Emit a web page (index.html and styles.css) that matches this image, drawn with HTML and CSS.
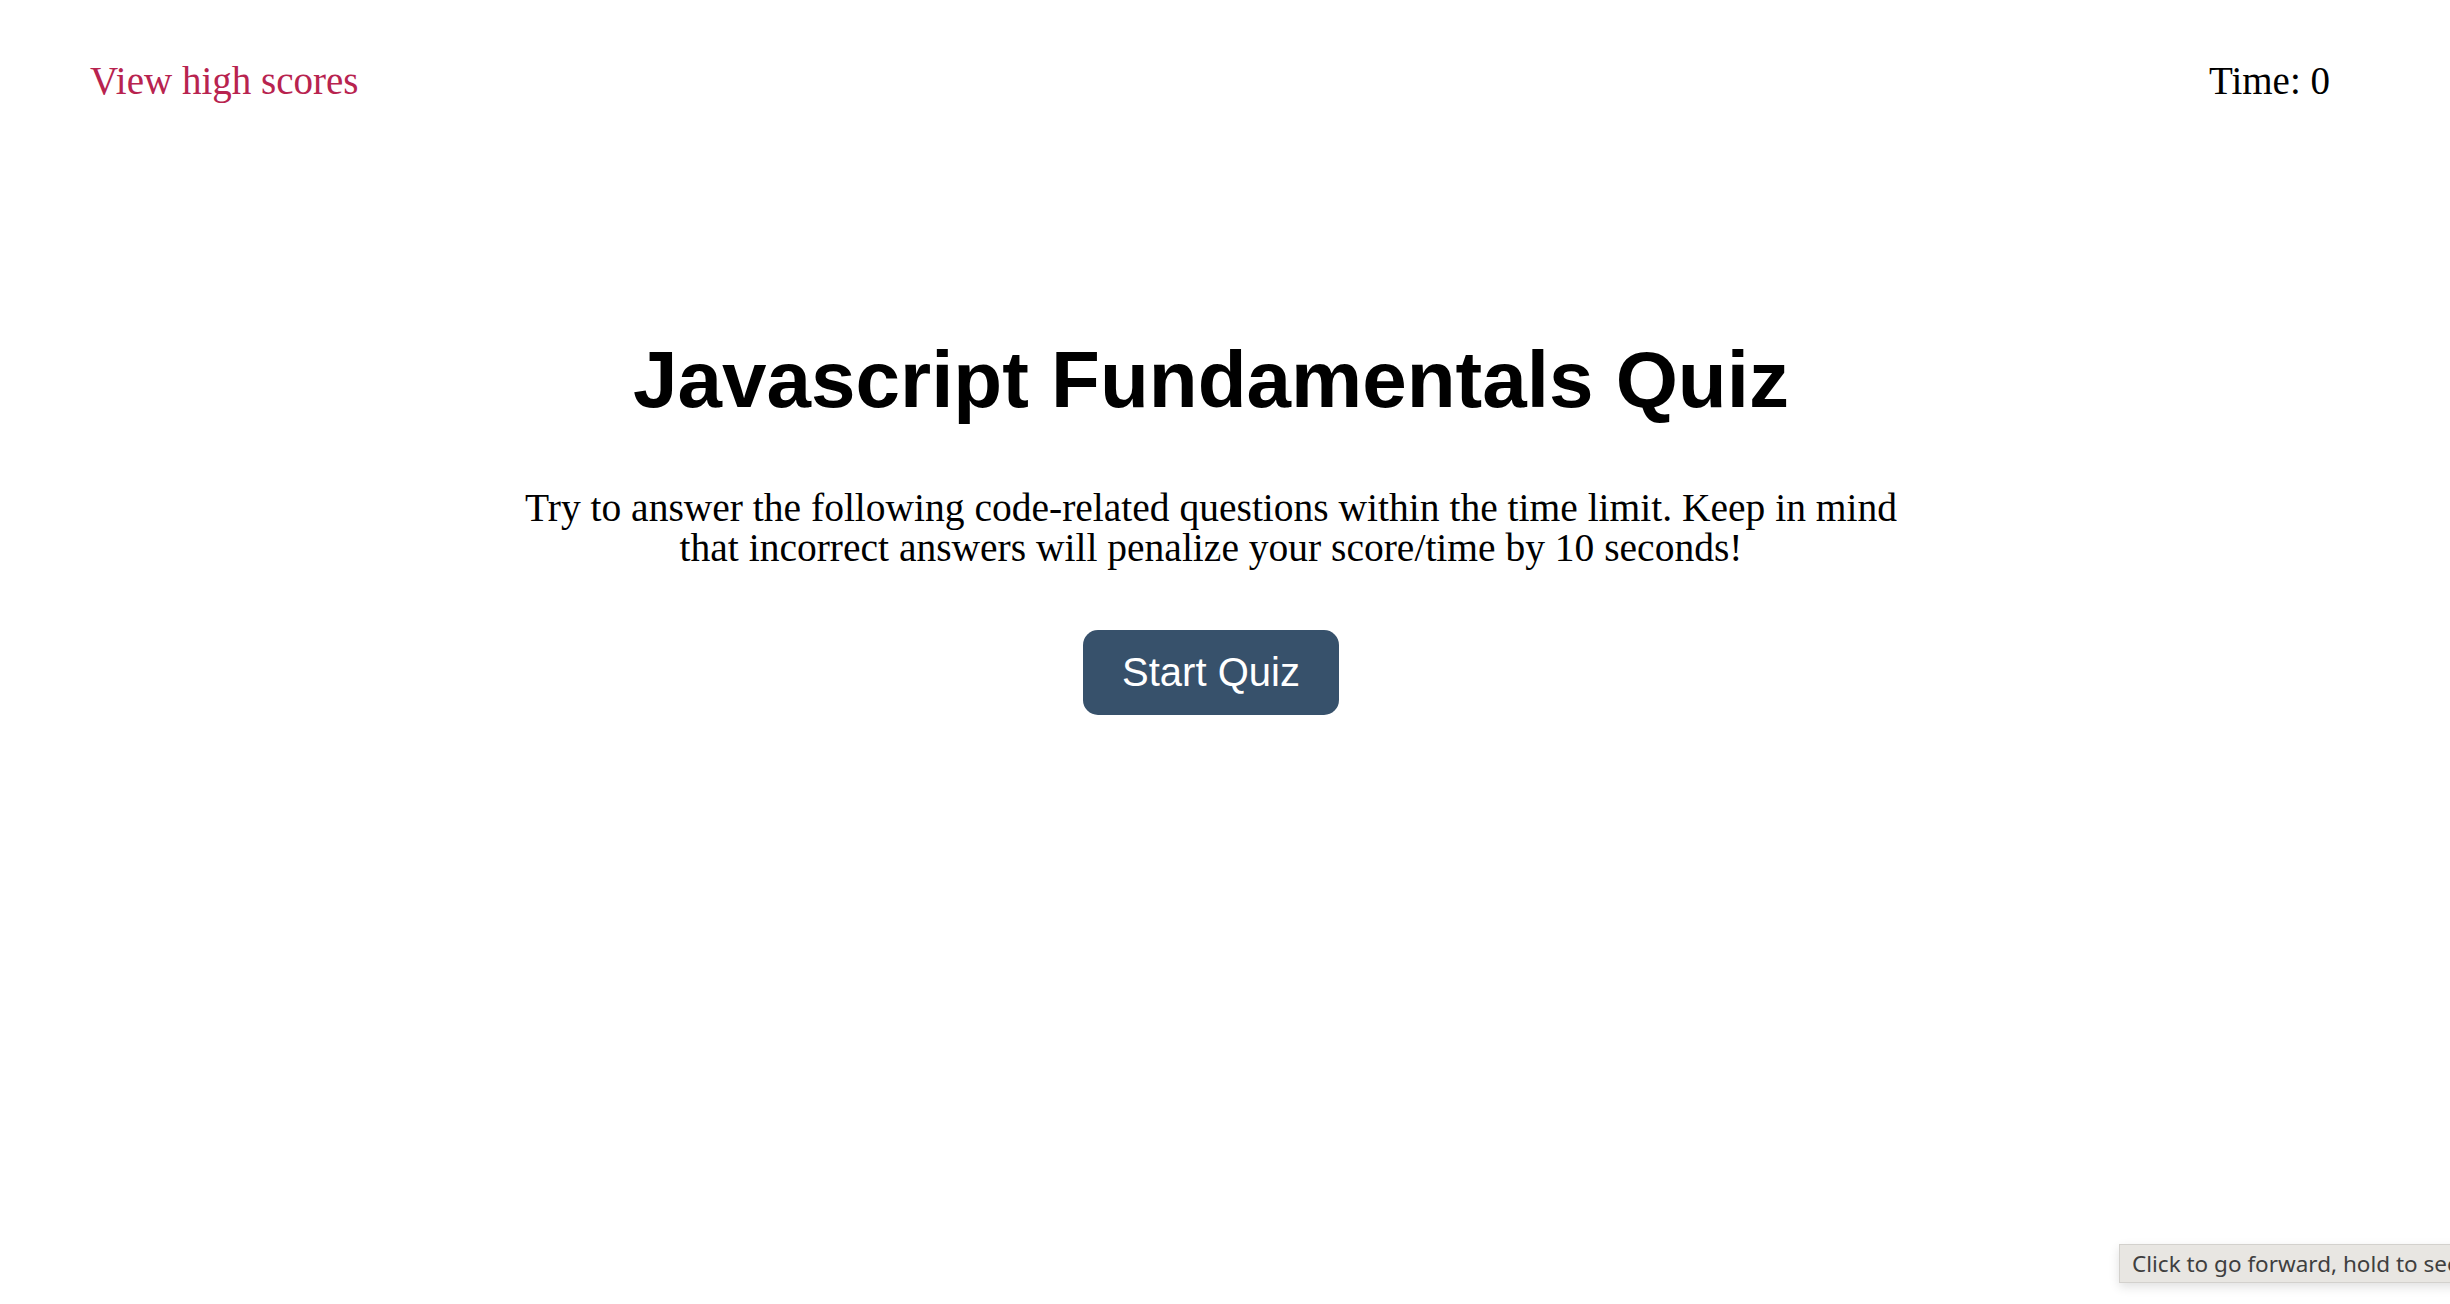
FILE: index.html
```html
<!DOCTYPE html>
<html lang="en">
<head>
<meta charset="utf-8">
<title>Javascript Fundamentals Quiz</title>
<link rel="stylesheet" href="styles.css">
</head>
<body>
<header class="top-bar">
  <a class="high-scores" href="#">View high scores</a>
  <div class="timer">Time: 0</div>
</header>
<main class="intro">
  <h1 class="title">Javascript Fundamentals Quiz</h1>
  <p class="lead">Try to answer the following code-related questions within the time limit. Keep in mind<br>that incorrect answers will penalize your score/time by 10 seconds!</p>
  <button class="start-btn" type="button">Start Quiz</button>
</main>
<div class="tooltip">Click to go forward, hold to see history</div>
</body>
</html>
```

FILE: styles.css
```css
html, body {
  margin: 0;
  padding: 0;
  background: #ffffff;
}

body {
  width: 2450px;
  height: 1304px;
  overflow: hidden;
  position: relative;
  font-family: "Liberation Serif", "Times New Roman", serif;
  color: #000;
}

.top-bar {
  display: flex;
  justify-content: space-between;
  align-items: flex-start;
  padding: 61px 120px 0 90px;
  font-size: 39px;
  line-height: 40px;
}

.high-scores {
  color: #b8234f;
  text-decoration: none;
}

.timer {
  color: #000;
}

.intro {
  display: flex;
  flex-direction: column;
  align-items: center;
  text-align: center;
  padding: 239px 28px 0 0;
}

.title {
  margin: 0 0 68px;
  font-family: "Liberation Sans", Arial, sans-serif;
  font-weight: bold;
  font-size: 80px;
  line-height: 80px;
}

.lead {
  margin: 0 0 62px;
  font-size: 39.5px;
  line-height: 40px;
}

.start-btn {
  margin: 0;
  padding: 22px 39px 23px;
  border: none;
  border-radius: 15px;
  background: #37516b;
  color: #ffffff;
  font-family: "Liberation Sans", Arial, sans-serif;
  font-size: 40px;
  line-height: 40px;
  cursor: pointer;
}

.tooltip {
  position: absolute;
  left: 2119px;
  top: 1244px;
  height: 37px;
  padding: 0 0 0 12px;
  white-space: nowrap;
  background: #e8e6e2;
  border: 1px solid #d3d1cd;
  box-shadow: 0 4px 10px rgba(0, 0, 0, 0.12);
  font-family: "Noto Sans", "DejaVu Sans", sans-serif;
  font-size: 22.5px;
  line-height: 37px;
  color: #3f3f3f;
}
```
